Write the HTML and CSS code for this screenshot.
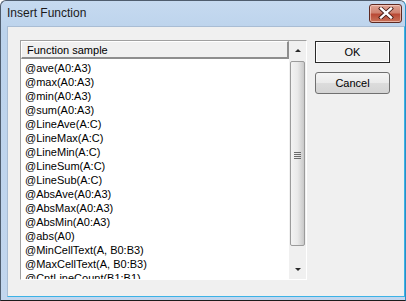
FILE: index.html
```html
<!DOCTYPE html>
<html lang="en">
<head>
  <meta charset="UTF-8" />
  <title>Insert Function</title>
  <link rel="stylesheet" href="styles.css">
</head>
<body>

<!-- Dialog window -->
<div class="window">
  <div class="titlebar">
    <span class="title">Insert Function</span>
    <div class="close-btn">
      <svg width="16" height="12" viewBox="0 0 16 12">
        <path d="M3 1.5 L13 10.5 M13 1.5 L3 10.5" stroke="#3b1410" stroke-width="4" stroke-linecap="square"/>
        <path d="M3 1.5 L13 10.5 M13 1.5 L3 10.5" stroke="#fff" stroke-width="2.4" stroke-linecap="square"/>
      </svg>
    </div>
  </div>

  <div class="client">
    <!-- List of function samples -->
    <div class="listbox">
      <div class="list-main">
        <div class="list-header">Function sample</div>
        <div class="list-items">
          <div class="list-item">@ave(A0:A3)</div>
          <div class="list-item">@max(A0:A3)</div>
          <div class="list-item">@min(A0:A3)</div>
          <div class="list-item">@sum(A0:A3)</div>
          <div class="list-item">@LineAve(A:C)</div>
          <div class="list-item">@LineMax(A:C)</div>
          <div class="list-item">@LineMin(A:C)</div>
          <div class="list-item">@LineSum(A:C)</div>
          <div class="list-item">@LineSub(A:C)</div>
          <div class="list-item">@AbsAve(A0:A3)</div>
          <div class="list-item">@AbsMax(A0:A3)</div>
          <div class="list-item">@AbsMin(A0:A3)</div>
          <div class="list-item">@abs(A0)</div>
          <div class="list-item">@MinCellText(A, B0:B3)</div>
          <div class="list-item">@MaxCellText(A, B0:B3)</div>
          <div class="list-item">@CntLineCount(B1:B1)</div>
        </div>
      </div>
      <div class="scrollbar">
        <div class="scroll-arrow"><span class="arrow-up"></span></div>
        <div class="scroll-track">
          <div class="scroll-thumb">
            <div class="grip"><i></i><i></i><i></i><i></i></div>
          </div>
        </div>
        <div class="scroll-arrow"><span class="arrow-down"></span></div>
      </div>
    </div>

    <!-- Buttons -->
    <div class="buttons">
      <button class="btn btn-default">OK</button>
      <button class="btn">Cancel</button>
    </div>
  </div>
</div>

</body>
</html>
```

FILE: styles.css
```css
* {
  margin: 0;
  padding: 0;
  box-sizing: border-box;
}

body {
  font-family: 'Liberation Sans', Arial, sans-serif;
  font-size: 11px;
  background: #ffffff;
}

/* Window frame */
.window {
  width: 406px;
  height: 301px;
  background: linear-gradient(#c6daf0, #bcd3ec 30px, #c2d6ee);
  border: 1px solid #4f5d6e;
  border-right-color: #2a8fc4;
  border-bottom-color: #1c1c1c;
  border-radius: 6px 6px 0 0;
  display: flex;
  flex-direction: column;
}

.titlebar {
  height: 25px;
  display: flex;
  align-items: center;
  justify-content: space-between;
  padding: 0 3px 2px 6px;
}

.title {
  font-family: 'Liberation Sans', Arial, sans-serif;
  font-size: 12px;
  color: #1a1a1a;
}

.close-btn {
  width: 33px;
  height: 19px;
  margin-top: 1px;
  border: 1px solid #5e2a22;
  border-radius: 3px;
  background: linear-gradient(#dfa596, #cf8270 45%, #b94a36 55%, #c9735a);
  box-shadow: inset 0 0 0 1px rgba(255, 220, 210, 0.6);
  display: flex;
  align-items: center;
  justify-content: center;
}

/* Client area */
.client {
  flex: 1;
  margin: 0 0 3px 6px;
  background: #f0f0f0;
  border: 1px solid #a9bdd4;
  border-right: 1px solid #3cb2e6;
  border-bottom: 1px solid #3cb2e6;
  display: flex;
  padding: 13px 12px 0 12px;
  gap: 8px;
}

/* Listbox */
.listbox {
  width: 287px;
  height: 240px;
  background: #fff;
  border: 1px solid #a0a0a0;
  border-right-color: #fff;
  border-bottom-color: #fff;
  display: flex;
  overflow: hidden;
}

.list-main {
  flex: 1;
  display: flex;
  flex-direction: column;
  overflow: hidden;
}

.list-header {
  height: 19px;
  background: #f0f0f0;
  border: 1px solid #fff;
  border-right: 2px solid #8e8e8e;
  border-bottom: 2px solid #8e8e8e;
  padding: 1px 0 0 5px;
  line-height: 14px;
  color: #000;
}

.list-items {
  padding: 2px 0 0 4px;
}

.list-item {
  height: 14px;
  line-height: 14px;
  color: #000;
  white-space: nowrap;
}

/* Scrollbar */
.scrollbar {
  width: 17px;
  display: flex;
  flex-direction: column;
  background: #f0f0f0;
}

.scroll-arrow {
  height: 19px;
  display: flex;
  align-items: center;
  justify-content: center;
}

.arrow-up,
.arrow-down {
  width: 0;
  height: 0;
  border-left: 3px solid transparent;
  border-right: 3px solid transparent;
}

.arrow-up {
  border-bottom: 3px solid #2a2a2a;
}

.arrow-down {
  border-top: 3px solid #2a2a2a;
}

.scroll-track {
  flex: 1;
  padding: 0 1px;
}

.scroll-thumb {
  height: 185px;
  margin-top: 1px;
  border: 1px solid #9b9b9b;
  border-radius: 2px;
  background: linear-gradient(90deg, #f3f3f3, #e9e9e9 50%, #d6d6d6 80%, #c9c9c9);
  display: flex;
  align-items: center;
  justify-content: center;
}

.grip {
  display: flex;
  flex-direction: column;
  gap: 1px;
  margin-top: 4px;
}

.grip i {
  display: block;
  width: 7px;
  height: 1px;
  background: #6a6a6a;
}

/* Buttons */
.buttons {
  display: flex;
  flex-direction: column;
  gap: 9px;
  padding-top: 1px;
}

.btn {
  width: 75px;
  height: 22px;
  font-family: 'Liberation Sans', Arial, sans-serif;
  font-size: 11px;
  color: #000;
  background: linear-gradient(#f5f5f5, #eaeaea 50%, #dcdcdc 51%, #d4d4d4);
  border: 1px solid #707070;
  border-radius: 3px;
}

.btn-default {
  border: 1px solid #2a2a2a;
  border-radius: 0;
  box-shadow: inset 0 0 0 1px #fff;
  background: #f0f0f0;
}
```
